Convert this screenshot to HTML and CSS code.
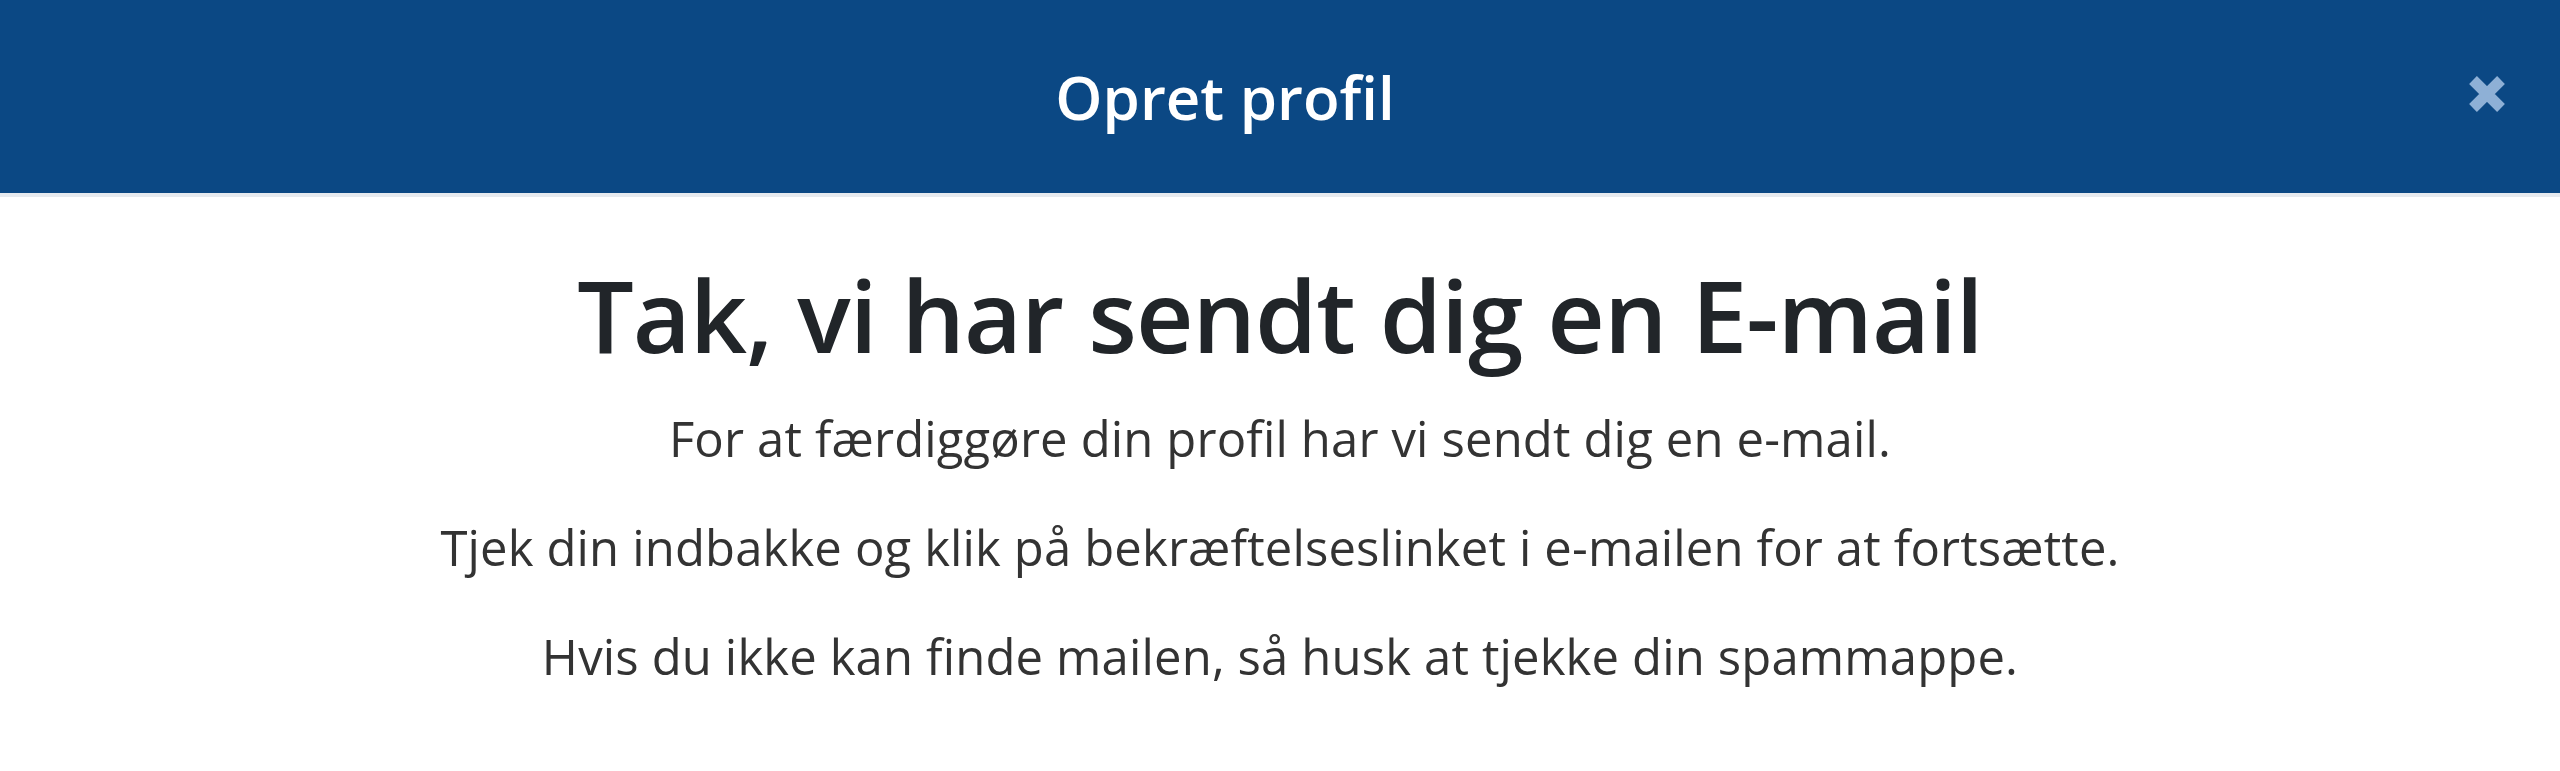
FILE: index.html
```html
<!DOCTYPE html>
<html lang="da">
<head>
  <meta charset="UTF-8">
  <title>Opret profil</title>
  <link rel="stylesheet" href="styles.css">
</head>
<body>
  <div class="modal-header">
    <h1 class="modal-title">Opret profil</h1>
    <button class="close" aria-label="Luk">
      <svg width="40" height="40" viewBox="0 0 40 40">
        <path d="M6 6 L34 34 M34 6 L6 34" stroke="currentColor" stroke-width="11" stroke-linecap="butt"/>
      </svg>
    </button>
  </div>

  <div class="modal-body">
    <h2>Tak, vi har sendt dig en E-mail</h2>
    <p>For at færdiggøre din profil har vi sendt dig en e-mail.</p>
    <p>Tjek din indbakke og klik på bekræftelseslinket i e-mailen for at fortsætte.</p>
    <p>Hvis du ikke kan finde mailen, så husk at tjekke din spammappe.</p>
  </div>
</body>
</html>
```

FILE: styles.css
```css
body {
  margin: 0;
  font-family: "Open Sans", "Noto Sans", sans-serif;
  background: #fff;
  color: #212529;
}
.modal-header {
  display: flex;
  align-items: center;
  height: 193px;
  background: #0b4884;
  color: #fff;
  border-bottom: 4px solid #e6eaef;
}
.modal-title {
  flex: 1;
  margin: 0;
  text-align: center;
  font-size: 60px;
  font-weight: 600;
  letter-spacing: 0;
}
.close {
  width: 110px;
  height: 193px;
  padding: 0 0 6px 17px;
  border: 0;
  background: none;
  color: #8eb0d6;
  display: flex;
  align-items: center;
  justify-content: flex-start;
  cursor: pointer;
}
.modal-body {
  text-align: center;
  padding-top: 57px;
}
.modal-body h2 {
  margin: 0;
  font-size: 100px;
  line-height: 120px;
  font-weight: 600;
  letter-spacing: -1px;
  color: #212529;
}
.modal-body p {
  margin: 0;
  font-size: 49px;
  line-height: 109px;
  letter-spacing: 0.15px;
  color: #333;
}
.modal-body h2 + p {
  margin-top: 10px;
}
```
